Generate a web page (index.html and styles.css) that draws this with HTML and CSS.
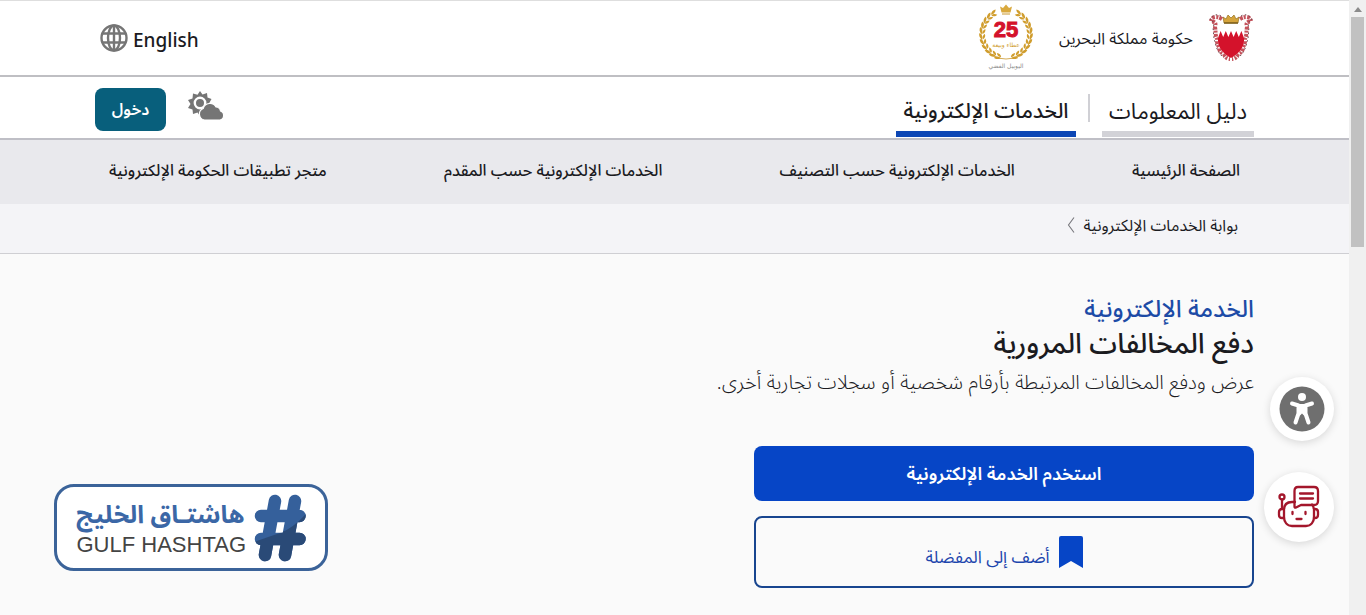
FILE: index.html
```html
<!DOCTYPE html>
<html lang="ar" dir="rtl">
<head>
<meta charset="utf-8">
<title>دفع المخالفات المرورية</title>
<link rel="stylesheet" href="styles.css">
</head>
<body>
<div class="page">
<header class="top">
  <div class="wrap top-row">
    <div class="brand">
      <svg class="emblem" viewBox="0 0 46 50" role="img" aria-label="شعار مملكة البحرين">
        <g fill="none" stroke="#c4525b" stroke-width="4" stroke-dasharray="3 1 2 1.500">
          <path d="M14 6C8 2 3 4 3 9c5-1 5 2 4 5 1 5 0 8 2 12 0 4 0 5 2 8 0 4 2 6 5 7 1 3 3 5 6 5"/>
          <path d="M32 6c6-4 11-2 11 3-5-1-5 2-4 5-1 5 0 8-2 12 0 4 0 5-2 8 0 4-2 6-5 7-1 3-3 5-6 5"/>
        </g>
        <g fill="none" stroke="#6f4a50" stroke-width="1" stroke-dasharray="1.500 2.500">
          <path d="M13 3C8 0 3 3 2 7c3 0 5 4 3 8 1 6 0 9 2 14 1 6 4 12 9 16M33 3c5-3 10 0 11 4-3 0-5 4-3 8-1 6 0 9-2 14-1 6-4 12-9 16"/>
        </g>
        <path d="M10 11h26v16c0 8-6 14-13 18-7-4-13-10-13-18z" fill="#fff"/>
        <path d="M10 25l2.600-7 2.600 6 2.600-6 2.600 6L23 18l2.600 6 2.600-6 2.600 6 2.600-6L36 25v3c0 7-6 13-13 17-7-4-13-10-13-17z" fill="#d4122b"/>
        <path d="M16 10l-1-6 3 2 2-4 3 3 3-3 2 4 3-2-1 6z" fill="#d5a43b" stroke="#93701f" stroke-width=".7"/>
        <path d="M16 10h14" stroke="#7d5f1c" stroke-width="1.500"/>
      </svg>
      <span class="brand-name">حكومة مملكة البحرين</span>
      <svg class="jubilee" viewBox="0 0 60 68" role="img" aria-label="25">
        <defs>
          <path id="leaf" d="M0-24.500c2-2.200 5-2.500 7-1.200-2 2.200-4.500 2.600-7 1.200z"/>
          <path id="leaf-in" d="M0-23.600c2-.6 4 .6 5 3-2.600.3-4.400-.8-5-3z"/>
          <g id="pair"><use href="#leaf"/><use href="#leaf-in"/></g>
          <g id="branch">
            <path d="M21.500-12A24.500 24.500 0 0 1 0 25" fill="none" stroke="#c9972c" stroke-width=".8"/>
            <g transform="scale(-1 1)">
              <use href="#pair" transform="rotate(-168)"/><use href="#pair" transform="rotate(-155)"/><use href="#pair" transform="rotate(-142)"/><use href="#pair" transform="rotate(-129)"/><use href="#pair" transform="rotate(-116)"/><use href="#pair" transform="rotate(-103)"/><use href="#pair" transform="rotate(-90)"/><use href="#pair" transform="rotate(-77)"/><use href="#pair" transform="rotate(-64)"/><use href="#pair" transform="rotate(-51)"/><use href="#pair" transform="rotate(-38)"/>
            </g>
          </g>
        </defs>
        <g transform="translate(30 30)" fill="#d09d2d"><use href="#branch"/><use href="#branch" transform="scale(-1 1)"/></g>
        <path d="M25.500 8.500L24 2.500l3 1.600L30 .5l3 3.600 3-1.600-1.500 6z" fill="#d9a93d"/>
        <path d="M26 10h8" stroke="#c9972c"/>
        <text x="30" y="33" class="jubilee-num">25</text>
        <text x="30" y="43" class="jubilee-small gold">عطاء وبيعة</text>
        <text x="30" y="64" class="jubilee-small gray">اليوبيل الفضي</text>
      </svg>
    </div>
    <a class="lang" href="#" lang="en"><span>English</span>
      <svg class="globe" viewBox="0 0 28 28" aria-hidden="true"><g fill="none" stroke="#757575" stroke-width="2.400"><circle cx="14" cy="14" r="12.500"/><ellipse cx="14" cy="14" rx="6" ry="12.500"/><path d="M14 1.500v25M2.500 9.500h23M2.500 18.500h23"/></g></svg>
    </a>
  </div>
</header>
<div class="bar">
  <div class="wrap bar-row">
    <nav class="tabs">
      <a class="tab" href="#">دليل المعلومات</a>
      <span class="tab-sep"></span>
      <a class="tab active" href="#">الخدمات الإلكترونية</a>
    </nav>
    <div class="bar-tools">
      <svg class="weather" viewBox="0 0 36 30" aria-hidden="true">
        <path d="M12 0l2.500 3.600L19 2l.5 4.500L23.500 8l-2.200 4L24 15l-4 2-1 4-4-1.500L12 25l-2.500-3.500L5 23l-.5-4.500L0 17l2.500-4L0 9l4.500-1.500L5 2.500l4.500 1.300z" fill="#757575"/>
        <circle cx="12" cy="12" r="5.200" fill="#757575" stroke="#fff" stroke-width="2.400"/>
        <path d="M16.500 29a6 6 0 0 1-1.300-11.500A7 7 0 0 1 28 16a5 5 0 0 1 4.500 4A4.700 4.700 0 0 1 32 29z" fill="#757575" stroke="#fff" stroke-width="1.200"/>
      </svg>
      <button class="login" type="button">دخول</button>
    </div>
  </div>
</div>
<nav class="menu"><div class="wrap menu-row">
  <a href="#">الصفحة الرئيسية</a><a href="#">الخدمات الإلكترونية حسب التصنيف</a><a href="#">الخدمات الإلكترونية حسب المقدم</a><a href="#">متجر تطبيقات الحكومة الإلكترونية</a>
</div></nav>
<nav class="crumbs"><div class="wrap crumbs-row">
  <a href="#">بوابة الخدمات الإلكترونية</a>
  <svg class="chev" viewBox="0 0 8 16" aria-hidden="true"><path d="M7 .5L1.500 8 7 15.500" fill="none" stroke="#77777c" stroke-width="1.100"/></svg>
</div></nav>
<main class="wrap hero">
  <p class="kicker">الخدمة الإلكترونية</p>
  <h1>دفع المخالفات المرورية</h1>
  <p class="desc">عرض ودفع المخالفات المرتبطة بأرقام شخصية أو سجلات تجارية أخرى.</p>
  <div class="actions">
    <button class="btn primary" type="button">استخدم الخدمة الإلكترونية</button>
    <button class="btn outline" type="button">
      <svg class="bookmark" viewBox="0 0 24 32" aria-hidden="true"><path d="M2 0h20a2 2 0 0 1 2 2v30l-12-7-12 7V2a2 2 0 0 1 2-2z" fill="#0645c6"/></svg>
      <span>أضف إلى المفضلة</span>
    </button>
  </div>
</main>
<div class="stamp">
  <svg class="hash" viewBox="0 0 52 68" aria-hidden="true">
    <defs><clipPath id="hash-low"><path d="M0 48Q14 43 26 39T52 20V68H0z"/></clipPath>
    <g id="hash-mark" fill="none" stroke-width="12.500" stroke-linecap="round"><path d="M21 7L11 61M41 7L31 61M7 22h38.500M7 45h38.500"/></g></defs>
    <use href="#hash-mark" stroke="#35609b"/><use href="#hash-mark" stroke="#2a4a77" clip-path="url(#hash-low)"/>
  </svg>
  <div class="stamp-text"><strong>هاشتـاق الخليج</strong><span lang="en" dir="ltr">GULF HASHTAG</span></div>
</div>
<div class="floats">
  <button class="float access" type="button" aria-label="إمكانية الوصول">
    <svg viewBox="0 0 46 46"><circle cx="23" cy="23" r="22.500" fill="#6f6f6f"/><circle cx="23" cy="11" r="4" fill="#fff"/><path d="M13 17.500l6.500 2v8l-3 9M33 17.500l-6.500 2v8l3 9" fill="none" stroke="#fff" stroke-width="4" stroke-linecap="round" stroke-linejoin="round"/><path d="M18 18h10v10.500l-3 1-2-2-2 2-3-1z" fill="#fff"/></svg>
  </button>
  <button class="float chat" type="button" aria-label="المساعد الآلي">
    <svg viewBox="0 0 42 42"><g fill="none" stroke="#a3162b" stroke-width="2.300" stroke-linecap="round" stroke-linejoin="round"><path d="M17 16h-3c-5 0-8 3-8 8v7c0 5 3 9 8 9h14c5 0 8-4 8-9v-7c0-2-.5-4-2-5.500"/><path d="M6 23H4c-2 0-3 1-3 3v3c0 2 1 3 3 3h2M36 23h1c2 0 3 1 3 3v3c0 2-1 3-3 3h-1M4 22v-8.500"/><circle cx="4" cy="11" r="2.500"/><path d="M20 1h16c2.500 0 4 1.500 4 4v10c0 2.500-1.500 4-4 4H23l-5 2.500c-1 .5-1.500 0-1.500-1V5c0-2.500 1-4 3.500-4z"/><path d="M22 7.500h13M22 12.500h13M14.500 26v2M27.500 26v2M18.500 33h5"/></g></svg>
  </button>
</div>
</div>
<div class="scroll" aria-hidden="true"><span class="arrow"></span><span class="thumb"></span></div>
</body>
</html>
```
FILE: styles.css
```css
*{box-sizing:border-box}
body{margin:0;min-height:100vh;display:flex;flex-direction:row-reverse;overflow:hidden;background:#fafafa;color:#1b1b1f;font-family:"Noto Sans","Noto Sans Arabic","DejaVu Sans",sans-serif;font-size:16px}
a{color:inherit;text-decoration:none}
button{font:inherit;border:0;padding:0;cursor:pointer}
svg{display:block;overflow:visible}
.page{flex:1;position:relative;min-width:0}
.wrap{padding:0 95px}
.top{background:#fff;border-top:1px solid #dedede;border-bottom:2px solid #bfbfc3}
.top-row{display:flex;justify-content:space-between;align-items:center;height:74px}
.brand{display:flex;align-items:center}
.emblem{width:46px;height:50px}
.brand-name{width:140px;margin:0 12px 0 20px;font-size:16px;line-height:32px;white-space:nowrap;text-align:center}
.jubilee{width:60px;height:68px}
.jubilee-num{font:bold 22px "Liberation Sans",Arial,sans-serif;fill:#d4122b;stroke:#d4122b;text-anchor:middle;direction:ltr}
.jubilee-small{font:6px "DejaVu Sans",sans-serif;text-anchor:middle}
.gold{fill:#d09d2d}
.gray{fill:#8b8b8b}
.lang{display:flex;align-items:center;gap:5px;padding-left:5px;font-family:"Noto Sans",sans-serif;font-size:19px;font-weight:500;line-height:28px}
.lang span{padding-top:4px}
.globe{width:28px;height:28px}
.bar{background:#fff;border-bottom:2px solid #bfbfc6}
.bar-row{display:flex;justify-content:space-between;align-items:center;height:61px}
.tabs{display:flex;align-self:flex-end;margin-bottom:1px}
.tab{border-bottom:6px solid #d2d2d7;padding:0 6px 4px;font-size:22px;line-height:34px;min-width:152px;text-align:center;white-space:nowrap}
.tab.active{border-color:#0d47b5;min-width:180px;font-size:21px;font-weight:500}
.tab-sep{width:2px;height:28px;margin:1px 12px 0 12px;background:#d0d0d5}
.bar-tools{display:flex;align-items:center;gap:22px}
.weather{width:36px;height:30px;margin-bottom:4px}
.login{width:71px;height:43px;margin-top:3px;border-radius:8px;background:#085f7c;color:#fff;font-weight:600;line-height:32px}
.menu{background:#e9e9ed}
.menu-row{display:flex;justify-content:space-between;align-items:center;height:64px;padding:0 109px 2px;font-size:16px;font-weight:500;white-space:nowrap}
.crumbs{background:#f4f4f7;border-bottom:1px solid #cfcfd3}
.crumbs-row{display:flex;align-items:center;gap:8px;height:49px;padding:0 111px 8px;font-size:16px}
.crumbs-row a{line-height:32px}
.chev{width:8px;height:16px}
.hero{padding-top:36px}
.kicker,.desc,h1{margin:0;font-weight:400}
.kicker{font-size:24px;line-height:36px;color:#1d4ba6;font-weight:500}
h1{font-size:28px;line-height:32px;font-weight:500}
.desc{margin-top:8px;font-size:20px;font-weight:300;line-height:32px}
.actions{display:grid;gap:15px;width:500px;max-width:100%;margin-top:48px}
.btn{border-radius:8px;font-size:18px}
.primary{height:55px;background:#0645c6;color:#fff;font-weight:600}
.outline{display:flex;justify-content:center;align-items:center;gap:9px;height:72px;border:2px solid #18458f;background:#fafafa;color:#1d46ad;font-size:17px}
.outline span{padding-top:12px}
.bookmark{width:24px;height:32px}
.stamp{position:absolute;left:54px;top:484px;display:flex;align-items:center;justify-content:center;gap:9px;width:274px;height:87px;border:3px solid #3b6399;border-radius:20px;background:#fff}
.hash{width:52px;height:68px}
.stamp-text{display:flex;flex-direction:column;width:168px;white-space:nowrap}
.stamp-text strong{font-size:25px;line-height:34px;color:#3b67a6}
.stamp-text span{font:22px/30px "Liberation Sans",Arial,sans-serif;color:#444}
.floats{position:absolute;right:15px;top:377px;display:flex;flex-direction:column;align-items:flex-start;gap:31px}
.float{display:grid;place-items:center;border-radius:50%;background:#fff;box-shadow:0 2px 8px rgba(0,0,0,.14)}
.access{width:64px;height:64px}
.access svg{width:46px;height:46px}
.chat{width:70px;height:70px}
.chat svg{width:42px;height:42px}
.scroll{display:flex;flex-direction:column;align-items:center;width:17px;background:#f0f0f0}
.arrow{margin:7px 0 5px;border:4px solid transparent;border-top:0;border-bottom:5px solid #8b8b8b}
.thumb{width:13px;height:230px;background:#c1c1c1}
```
